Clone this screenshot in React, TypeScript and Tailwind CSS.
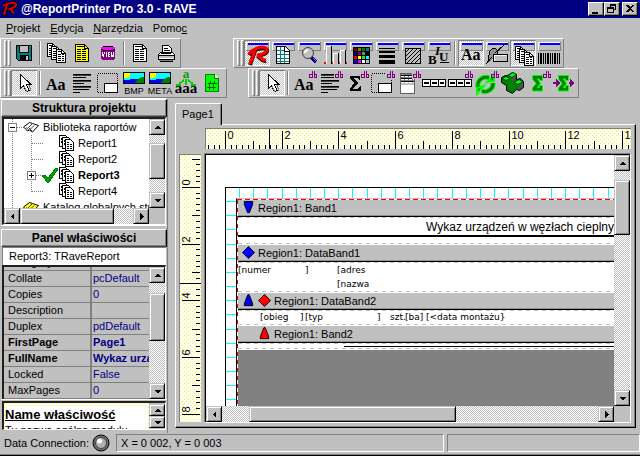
import React from "react";

const RAISED =
  "border border-t-[#c0c0c0] border-l-[#c0c0c0] border-r-black border-b-black bg-[#c0c0c0] shadow-[inset_1px_1px_#fff,inset_-1px_-1px_#808080]";
const DITHER =
  "bg-[repeating-conic-gradient(#fff_0_25%,#c0c0c0_0_50%)] bg-[length:2px_2px]";
const DOTTED =
  "bg-white bg-[conic-gradient(at_1px_1px,transparent_75%,#ff0_0),conic-gradient(at_1px_1px,transparent_75%,#ff0_0)] bg-[length:4px_4px] bg-[position:0_0,2px_2px]";

type Kids = { children?: React.ReactNode };

/* ---------- toolbar glyphs, drawn on a 26 x 26 button face ---------- */

function Glyph({ children }: Kids) {
  return (
    <svg width="26" height="26" viewBox="0 0 26 26" shapeRendering="crispEdges" className="block" aria-hidden="true">
      {children}
    </svg>
  );
}

function Sheet({ x, y, w = 10, h = 14, fill = "#fff" }: { x: number; y: number; w?: number; h?: number; fill?: string }) {
  const lines = [];
  for (let r = 5; r < h - 2; r += 2) {
    lines.push(<path key={r} d={`M${x + 2} ${y + r + 0.5}h${w - 4}`} stroke="#000" strokeDasharray={w > 11 ? "4 1" : "3 1"} />);
  }
  return (
    <g>
      <path d={`M${x + 0.5} ${y + 0.5}h${w - 5}l4 4v${h - 5}h-${w - 1}z`} fill={fill} stroke="#000" />
      <path d={`M${x + w - 4.5} ${y + 0.5}v4h4`} fill="none" stroke="#000" />
      <path d={`M${x + 2} ${y + 2.5}h${w - 7}`} stroke="#000" />
      {lines}
    </g>
  );
}

function Pane() {
  return (
    <g>
      <path d="M3 2h21v9H3z" fill="#c0c0c0" />
      <path d="M2.500 10V2.500H24" fill="none" stroke="#fff" />
      <path d="M24.500 2V10.500H3" fill="none" stroke="#808080" />
      <path d="M4 3h20v2H4z" fill="#00f" />
    </g>
  );
}

function Db() {
  return (
    <path
      d="M21.500 1v7M21 4.500h-2.500v3h3M23.500 1v7M24 4.500h1.500v3h-2"
      fill="none"
      stroke="#800080"
    />
  );
}

const SaveGlyph = () => (
  <Glyph>
    <path d="M5 5h16v16H7l-2-2z" fill="#000" />
    <path d="M6 6h14v14H7l-1-1z" fill="#008080" />
    <path d="M8 6h10v7H8z" fill="#000" />
    <path d="M9 6h8v6H9z" fill="#c0c0c0" />
    <path d="M9 15h9v6H9z" fill="#000" />
    <path d="M15 16h2v4h-2z" fill="#c0c0c0" />
    <path d="M19 6h1v1h-1z" fill="#c0c0c0" />
  </Glyph>
);

const StackGlyph = ({ pane = false }: { pane?: boolean }) => (
  <Glyph>
    {pane && <Pane />}
    <g transform={pane ? "translate(1 3)" : undefined}>
      <Sheet x={4} y={3} />
      <Sheet x={8} y={6} />
      <Sheet x={13} y={9} />
    </g>
  </Glyph>
);

const DocGlyph = ({ fill = "#fff" }: { fill?: string }) => (
  <Glyph>
    <Sheet x={6} y={4} w={14} h={18} fill={fill} />
  </Glyph>
);

const ViewGlyph = () => (
  <Glyph>
    <path d="M7 7h12v12l-2 1H9l-2-1z" fill="#800080" />
    <path d="M6 8h14v11h-1v1H7v-1H6z" fill="#800080" />
    <path d="M8 6h10v1h2v2h-2v1H8V9H6V7h2z" fill="#f0f" />
    <path d="M8 6.500h10M6 9.500h2M18 9.500h2M8 10.500h10" stroke="#000" />
    <path d="M7.500 12v3l1 2v-2l1-2v-1M11.500 12v5M15 12.500h-2v4h2M13 14.500h2M16.500 12v4.500h1v-2v2h1v-4.500" fill="none" stroke="#fff" />
  </Glyph>
);

const PrinterGlyph = () => (
  <Glyph>
    <path d="M9.500 13.500v-8h6l3 3v5z" fill="#fff" stroke="#000" />
    <path d="M11 8.500h4M11 10.500h6" stroke="#000" />
    <path d="M5.500 14.500l2-2h12l2 2v5h-16z" fill="#fff" stroke="#000" />
    <path d="M6 16h15v2H6z" fill="#c0c0c0" />
    <path d="M8 13.500h10M5 15.500h17M7 21.500h13" stroke="#000" />
    <path d="M6 20h14v1H6z" fill="#808080" />
  </Glyph>
);

const ArrowGlyph = () => (
  <Glyph>
    <path d="M9.500 4.500v14l3-3 3 6 2.500-1-2.500-6h4.500z" fill="#fff" stroke="#000" />
    <path d="M13 16l3 6M18 15l2 6" stroke="#808080" />
  </Glyph>
);

const AaGlyph = ({ db = false, pane = false }: { db?: boolean; pane?: boolean }) => (
  <Glyph>
    {pane && <Pane />}
    <text x="3" y="20" fontFamily="Liberation Serif, serif" fontWeight="700" fontSize="16">
      Aa
    </text>
    {db && <Db />}
  </Glyph>
);

const LinesGlyph = ({ db = false }: { db?: boolean }) => (
  <Glyph>
    <path d="M4 4.500h18M4 7.500h13M4 10.500h18M4 13.500h11M4 16.500h18M4 19.500h16M4 22.500h7" stroke="#000" />
    <path d="M4 5.500h18M4 11.500h18M4 17.500h18" stroke="#404040" />
    {db && <path d="M17 1h9v8h-9z" fill="#c0c0c0" />}
    {db && <Db />}
  </Glyph>
);

const SectionGlyph = ({ db = false }: { db?: boolean }) => (
  <Glyph>
    <path d="M2.500 3.500h20v19h-20z" fill="none" stroke="#000" strokeDasharray="1 1" />
    <path d="M9.500 13.500h13v9h-13z" fill="#fff" stroke="#000" />
    {db && <path d="M17 1h9v8h-9z" fill="#c0c0c0" />}
    {db && <Db />}
  </Glyph>
);

const ImageGlyph = ({ label }: { label: string }) => (
  <Glyph>
    <path d="M2 2h22v12H2z" fill="#000" />
    <path d="M3 3h20v10H3z" fill="#0ff" />
    <path d="M3 3h6v3l-2 2H3z" fill="#ff0" />
    <path d="M3 10h4l3-1h13v4H3z" fill="#00f" />
    <path d="M14 13l4-5 3-1h2v6z" fill="#008000" />
    <text x="13" y="24" textAnchor="middle" fontFamily="Liberation Sans, sans-serif" fontSize="9">
      {label}
    </text>
  </Glyph>
);

const TreeTextGlyph = () => (
  <Glyph>
    <path d="M13 9v6M11 10l-5 4M15 10l5 4M3 15h5M18 15h5" stroke="#0c0" strokeWidth="2" fill="none" />
    <text x="13" y="8" textAnchor="middle" fill="#00a000" fontFamily="Liberation Serif, serif" fontWeight="700" fontSize="13">
      a
    </text>
    <text x="13" y="23" textAnchor="middle" fontFamily="Liberation Serif, serif" fontWeight="700" fontSize="15">
      aaa
    </text>
  </Glyph>
);

const NumberGlyph = () => (
  <Glyph>
    <path d="M6.500 4.500h9l4 4v13h-13z" fill="#0f0" stroke="#008000" />
    <path d="M15.500 4.500v4h4" fill="#fff" stroke="#008000" />
    <path d="M11.500 11l-1.500 9M15.500 11l-1.500 9M8.500 13.500h9M7.500 17.500h9" stroke="#006000" fill="none" />
  </Glyph>
);

const GridSheetGlyph = () => (
  <Glyph>
    <Pane />
    <path d="M6.500 6.500h9l4 4v13h-13z" fill="#fff" stroke="#000" />
    <path d="M10.500 7v16M14.500 7v16M7 10.500h12M7 14.500h12M7 18.500h12M7 21.500h12" stroke="#008080" />
    <path d="M14.500 6.500v5h5" fill="#fff" stroke="#000" />
  </Glyph>
);

const MagnifierGlyph = () => (
  <Glyph>
    <Pane />
    <path d="M15.500 17.500l5 5" stroke="#000080" strokeWidth="3" />
    <circle cx="12" cy="13" r="5.500" fill="#c0c0c0" stroke="#404040" shapeRendering="auto" />
    <path d="M9 13a3 3 0 0 1 3-3" fill="none" stroke="#fff" strokeWidth="2" shapeRendering="auto" />
    <path d="M17 18l4 4" stroke="#8080c0" />
  </Glyph>
);

const AlignGlyph = () => (
  <Glyph>
    <Pane />
    <path d="M2 23h23" stroke="#f00" strokeWidth="2" />
    <path d="M5 6h4v18H5zM12 13h4v11h-4zM19 10h4v14h-4z" fill="#c0c0c0" />
    <path d="M4.500 24V6.500H9M11.500 24V13.500H16M18.500 24V10.500H23" fill="none" stroke="#fff" />
    <path d="M9.500 6v18M16.500 13v11M23.500 10v14" stroke="#000" />
  </Glyph>
);

const SWATCHES = [
  ["#800000", "#808000", "#008000", "#008080"],
  ["#000080", "#800080", "#808080", "#000000"],
  ["#ff0000", "#ffff00", "#00ff00", "#00ffff"],
  ["#0000ff", "#ff00ff", "#ffffff", "#c0c0c0"],
];

const PaletteGlyph = () => (
  <Glyph>
    <Pane />
    <path d="M5 7h17v17H5z" fill="#000" />
    {SWATCHES.map((row, r) =>
      row.map((c, i) => <rect key={`${r}-${i}`} x={6 + i * 4} y={8 + r * 4} width="3" height="3" fill={c} />)
    )}
  </Glyph>
);

const StrokeGlyph = () => (
  <Glyph>
    <Pane />
    <path d="M5 8h16v1H5zM5 11h16v2H5zM5 15h16v3H5zM5 20h16v4H5z" fill="#000" />
  </Glyph>
);

const HatchGlyph = () => (
  <Glyph>
    <Pane />
    <path d="M5.500 8.500h15v15h-15z" fill="#c0c0c0" stroke="#000" />
    <path d="M6 12l3-3M6 16l7-7M6 20l11-11M7 23L20 10M11 23l9-9M15 23l5-5" stroke="#000" />
  </Glyph>
);

const FontStyleGlyph = () => (
  <Glyph>
    <Pane />
    <g fontFamily="Liberation Serif, serif" fontWeight="700">
      <text x="9" y="15" fontSize="13" fontStyle="italic">
        I
      </text>
      <text x="2" y="24" fontSize="13">
        B
      </text>
      <text x="13" y="21" fontSize="13">
        U
      </text>
    </g>
    <path d="M14 22.500h9" stroke="#000" />
  </Glyph>
);

const ShapesGlyph = () => (
  <Glyph>
    <Pane />
    <path d="M5 22c-1-6 0-13 5-14 3 0 4 3 3 6" fill="#909090" stroke="#000" />
    <path d="M2 24l6-7M11 13l9-8" stroke="#000" fill="none" />
    <path d="M9.500 14.500h14v7h-14z" fill="#c0c0c0" stroke="#000" />
    <path d="M10.500 21V15.500H23" stroke="#fff" fill="none" />
  </Glyph>
);

const BarcodeGlyph = () => (
  <Glyph>
    <Pane />
    <path
      d="M2 13h1v11H2zM4 13h2v11H4zM7 13h1v11H7zM9 13h1v11H9zM11 13h2v11h-2zM14 13h1v11h-1zM16 13h1v11h-1zM18 13h2v11h-2zM21 13h1v11h-1zM23 13h1v11h-1z"
      fill="#000"
    />
  </Glyph>
);

const SigmaGlyph = () => (
  <Glyph>
    <path d="M7 6h10v4h-1l-1-2h-4l4 5-5 6h5l2-3h1v5H7v-2l4-6-4-5z" fill="#000" />
    <Db />
  </Glyph>
);

const MemoGlyph = () => (
  <Glyph>
    <path d="M5 3h15v9H5z" fill="#808080" />
    <path d="M5.500 3.500h14v20h-14z" fill="none" stroke="#606060" />
    <path d="M6 6.500h13M6 9.500h13M6 12.500h13" stroke="#fff" strokeDasharray="3 1" />
    <path d="M6 5.500h13M6 8.500h13M6 11.500h13" stroke="#000" />
    <path d="M6 15h13v8H6z" fill="#fff" />
    <path d="M17 1h9v8h-9z" fill="#c0c0c0" />
    <Db />
  </Glyph>
);

const NavGlyph = ({ db = false }: { db?: boolean }) => (
  <Glyph>
    <path d="M1.500 9.500h23v7h-23z" fill="#fff" stroke="#000" />
    <path d="M9.500 10v6M17.500 10v6" stroke="#000" />
    <path d="M3 13h5M11 13h5M19 13h4" stroke="#000" strokeWidth="2" />
    {db && <Db />}
  </Glyph>
);

const CycleGlyph = () => (
  <Glyph>
    <g shapeRendering="auto" fill="none">
      <path d="M5 17a8 8 0 0 1 11-9M20 13a8 8 0 0 1-11 8" stroke="#0f0" strokeWidth="5" />
      <path d="M14 12l7-1v-6zM11 16l-7 2v6z" stroke="#0f0" strokeWidth="2" fill="#008000" />
      <path d="M5 17a8 8 0 0 1 11-9M20 13a8 8 0 0 1-11 8" stroke="#008000" strokeWidth="3" />
    </g>
    <Db />
  </Glyph>
);

const CubesGlyph = () => (
  <Glyph>
    <g shapeRendering="auto">
      <path d="M8.500 5.500l5-3 4 2v5l4-1 3 3v6l-4 3-3-1-4 4-6-3v-5l-5-3v-5l4-2z" fill="#008000" stroke="#000" />
      <path d="M9 5.500l5-3 3.500 2-4.500 3zM3 8.500l4-2 4 2-4 2zM15 12.500l5-3 4 2-5 3z" fill="#0f0" stroke="#004000" />
      <path d="M19 15l5-3v5l-5 3zM13 8l4-3v5l-4 2z" fill="#505050" />
    </g>
  </Glyph>
);

const GreenSigma = ({ x = 0 }: { x?: number }) => (
  <g transform={`translate(${x} 0)`} shapeRendering="auto">
    <path d="M7.500 5.500h10v5h-3v-1.500h-2l3 4.500-3 4h2v-2h3v5.500h-10v-3l3.500-4.500-3.500-4.500z" fill="#008000" stroke="#0f0" />
  </g>
);

const CalcSigmaGlyph = () => (
  <Glyph>
    <GreenSigma />
    <Db />
  </Glyph>
);

const CalcFlowGlyph = () => (
  <Glyph>
    <path d="M2 13h4M18 13h3" stroke="#800080" strokeWidth="2" />
    <path d="M5 9l4 4-4 4zM19 9l4 4-4 4z" fill="#800080" />
    <GreenSigma />
  </Glyph>
);

const RaveGlyph = () => (
  <Glyph>
    <Pane />
    <g shapeRendering="auto">
      <path d="M5 15c4-6 15-9 18-5 1 3-5 6-10 6 4 1 4 6 9 5M11 11L6 25" fill="none" stroke="#400000" strokeWidth="4" />
      <path d="M5 14c4-6 15-9 18-5 1 3-5 6-10 6 4 1 4 6 9 5M11 10L6 24" fill="none" stroke="#f00" strokeWidth="3" />
    </g>
  </Glyph>
);

/* ---------- toolbars ---------- */

function Tool({ label, on = false, children }: Kids & { label: string; on?: boolean }) {
  return (
    <button
      type="button"
      aria-label={label}
      aria-pressed={on}
      className={
        on
          ? "size-[26px] shadow-[inset_1px_1px_#808080,inset_-1px_-1px_#fff] bg-[repeating-conic-gradient(#fff_0_25%,#c0c0c0_0_50%)] bg-[length:2px_2px]"
          : "size-[26px]"
      }
    >
      {children}
    </button>
  );
}

const Rule = () => (
  <span className="flex w-[6px] justify-center py-px">
    <span className="w-[2px] border-l border-l-[#808080] border-r border-r-white" />
  </span>
);

function Toolbar({ label, children }: Kids & { label: string }) {
  return (
    <div
      role="toolbar"
      aria-label={label}
      className="flex h-[30px] border border-t-white border-l-white border-r-[#808080] border-b-[#808080] py-px pr-px"
    >
      <span className="flex w-[10px] gap-px pl-[3px]">
        <span className="w-[3px] border border-t-white border-l-white border-r-[#808080] border-b-[#808080]" />
        <span className="w-[3px] border border-t-white border-l-white border-r-[#808080] border-b-[#808080]" />
      </span>
      {children}
    </div>
  );
}

/* ---------- scroll bars ---------- */

const ARROWS = {
  up: "M4 9h7L7.500 5.500z",
  down: "M4 6h7L7.500 9.500z",
  left: "M9 4v7L5.500 7.500z",
  right: "M6 4v7L9.500 7.500z",
};

function Arrow({ dir, small = false }: { dir: keyof typeof ARROWS; small?: boolean }) {
  return (
    <button
      type="button"
      aria-label={dir}
      className={`${RAISED} flex w-4 shrink-0 items-center justify-center overflow-hidden ${small ? "h-3" : "h-4"}`}
    >
      <svg width="15" height="15" viewBox="0 0 15 15" shapeRendering="crispEdges" className="shrink-0">
        <path d={ARROWS[dir]} fill="#000" />
      </svg>
    </button>
  );
}

function VScroll({ before, thumb }: { before: string; thumb: string }) {
  return (
    <div className={`${DITHER} flex w-4 shrink-0 flex-col`}>
      <Arrow dir="up" />
      <div className={before} />
      <div className={`${RAISED} ${thumb}`} />
      <div className="flex-1" />
      <Arrow dir="down" />
    </div>
  );
}

function HScroll({ before, thumb }: { before: string; thumb: string }) {
  return (
    <div className={`${DITHER} flex h-4 min-w-0 flex-1`}>
      <Arrow dir="left" />
      <div className={before} />
      <div className={`${RAISED} ${thumb}`} />
      <div className="flex-1" />
      <Arrow dir="right" />
    </div>
  );
}

/* ---------- project tree ---------- */

const Book = ({ fill }: { fill: string }) => (
  <svg width="16" height="16" viewBox="0 0 16 16" className="shrink-0">
    <path d="M.500 8l6-4.500 3 1 6 2-6 6.500-3-2-2 1z" fill={fill} stroke="#000" />
    <path d="M9.500 4.500l-5 5M3 8.500l2.500 2M9 12l-3-3M11 6.500l-4 4" stroke="#404040" fill="none" />
  </svg>
);

const MiniStack = () => (
  <svg width="16" height="16" viewBox="0 0 16 16" shapeRendering="crispEdges" className="shrink-0">
    <path d="M.500.500h6l2 2v9h-8z" fill="#fff" stroke="#000" />
    <path d="M3.500 2.500h6l2 2v9h-8z" fill="#fff" stroke="#000" />
    <path d="M6.500 4.500h5l3 3v8h-8z" fill="#fff" stroke="#000" />
    <path d="M8 7.500h3M8 9.500h5M8 11.500h5M8 13.500h5M2 3v6M5 5v6" stroke="#000" strokeDasharray="2 1" />
  </svg>
);

const Expander = ({ x, plus = false }: { x: number; plus?: boolean }) => (
  <g>
    <rect x={x + 0.5} y="4.500" width="8" height="8" fill="#fff" stroke="#808080" />
    <path d={`M${x + 2} 8.500h5`} stroke="#000" />
    {plus && <path d={`M${x + 4.5} 6v5`} stroke="#000" />}
  </g>
);

function Report({ name, current = false, last = false }: { name: string; current?: boolean; last?: boolean }) {
  return (
    <li className="flex h-4 items-center">
      <svg width="55" height="16" viewBox="0 0 55 16" shapeRendering="crispEdges" className="shrink-0">
        <path d={`M8.500 0v16M27.500 0v${last ? 9 : 16}M28 8.500h11`} stroke="#808080" strokeDasharray="1 1" />
        {current && <Expander x={23} plus />}
        {current && <path d="M38 8h3l3 3 8-10 2 1-9 13h-2z" fill="#00a000" stroke="#008000" />}
      </svg>
      <MiniStack />
      <span className={current ? "pl-[3px] font-bold" : "pl-[3px]"}>{name}</span>
    </li>
  );
}

function ProjectTree() {
  return (
    <div className="mx-px flex h-[108px] flex-col border-t-2 border-l-2 border-t-[#202020] border-l-[#202020] border-r border-b border-r-white border-b-white">
      <div className="flex min-h-0 flex-1">
        <ul className="min-w-0 flex-1 overflow-hidden whitespace-nowrap bg-white">
          <li className="flex h-4 items-center">
            <svg width="19" height="16" viewBox="0 0 19 16" shapeRendering="crispEdges" className="shrink-0">
              <path d="M8.500 0v16M13 8.500h6" stroke="#808080" strokeDasharray="1 1" />
              <Expander x={4} />
            </svg>
            <Book fill="#fff" />
            <span className="pl-1">Biblioteka raportów</span>
          </li>
          <Report name="Report1" />
          <Report name="Report2" />
          <Report name="Report3" current />
          <Report name="Report4" last />
          <li className="flex h-4 items-center">
            <svg width="19" height="16" viewBox="0 0 19 16" shapeRendering="crispEdges" className="shrink-0">
              <path d="M8.500 0v16" stroke="#808080" strokeDasharray="1 1" />
            </svg>
            <Book fill="#ff0" />
            <span className="pl-1">Katalog globalnych stron</span>
          </li>
        </ul>
        <VScroll before="h-2" thumb="h-9" />
      </div>
      <div className="flex">
        <HScroll before="w-0" thumb="w-[94px]" />
        <div className="size-4 bg-[#c0c0c0]" />
      </div>
    </div>
  );
}

/* ---------- property grid ---------- */

const PROPS: [string, string, boolean?][] = [
  ["Category", ""],
  ["Collate", "pcDefault"],
  ["Copies", "0"],
  ["Description", ""],
  ["Duplex", "pdDefault"],
  ["FirstPage", "Page1", true],
  ["FullName", "Wykaz urządzeń", true],
  ["Locked", "False"],
  ["MaxPages", "0"],
];

function PropertyGrid() {
  return (
    <div className="mx-px flex min-h-0 flex-1 border-t-2 border-l-2 border-t-[#202020] border-l-[#202020] border-r border-r-white">
      <div className="flex min-w-0 flex-1 items-end overflow-hidden">
        <table className="w-full table-fixed border-collapse">
          <tbody>
            {PROPS.map(([name, value, bold]) => (
              <tr key={name} className={bold ? "h-4 font-bold" : "h-4"}>
                <th
                  scope="row"
                  className={`h-4 w-[87px] border-b border-b-[#808080] border-r-2 border-r-[#808080] p-0 pl-1 text-left leading-[15px] ${bold ? "font-bold" : "font-normal"}`}
                >
                  {name}
                </th>
                <td className="h-4 overflow-hidden border-b border-b-[#808080] p-0 pl-px leading-[15px] whitespace-nowrap text-[#000080]">
                  {value}
                </td>
              </tr>
            ))}
          </tbody>
        </table>
      </div>
      <VScroll before="h-[10px]" thumb="h-12" />
    </div>
  );
}

const PanelTitle = ({ children }: Kids) => (
  <h2 className="h-[18px] border border-t-white border-l-white border-r-black border-b-[#404040] text-center text-[12px] leading-[16px] font-bold shadow-[inset_-1px_-1px_#808080]">
    {children}
  </h2>
);

function SidePanel() {
  return (
    <aside className="flex w-[168px] shrink-0 flex-col border-t border-r border-t-white border-r-[#808080] pl-px">
      <PanelTitle>Struktura projektu</PanelTitle>
      <ProjectTree />
      <div className="h-1 border-t border-t-white" />
      <PanelTitle>Panel właściwości</PanelTitle>
      <div className="mx-px h-[18px] border-t border-l border-t-[#808080] border-l-[#808080] bg-white pl-[6px] leading-[17px]">
        Report3: TRaveReport
      </div>
      <PropertyGrid />
      <div className="h-[2px] border-t border-t-white" />
      <div className="mx-px flex h-[29px] border-t-2 border-l-2 border-r border-b border-t-[#202020] border-l-[#202020] border-r-white border-b-white">
        <div className={`${DOTTED} min-w-0 flex-1 overflow-hidden px-px pt-[3px]`}>
          <div className="h-full overflow-hidden bg-white whitespace-nowrap">
            <h3 className="h-[18px] text-[13px] leading-[18px] font-bold underline">Name właściwość</h3>
            <p className="leading-[12px]">Tu nazwa ogólna modułu</p>
          </div>
        </div>
        <div className="flex flex-col justify-center bg-[#c0c0c0]">
          <Arrow dir="up" small />
          <Arrow dir="down" small />
        </div>
      </div>
      <div className="h-[3px]" />
    </aside>
  );
}

/* ---------- rulers ---------- */

const STEP = 28.35;

function HRuler() {
  const marks = [];
  const count = Math.ceil(((window.innerWidth - 234) / STEP) * 5);
  for (let i = -3; i < count; i++) {
    const x = Math.round(19 + (i * STEP) / 5) + 0.5;
    const top = i % 10 === 0 ? 2 : i % 5 === 0 ? 12 : 16;
    marks.push(<path key={i} d={`M${x} ${top}V20`} stroke="#000" />);
    if (i >= 0 && i % 10 === 0) {
      marks.push(
        <text key={`t${i}`} x={x + 2} y="10" fontSize="11" fontFamily="Liberation Sans, sans-serif">
          {i / 5}
        </text>
      );
    }
  }
  return (
    <div className={`${DOTTED} ml-px h-[21px] overflow-hidden border-t border-l border-t-[#808080] border-l-[#808080]`}>
      <svg height="20" shapeRendering="crispEdges" className="block w-full">
        {marks}
        <path d="M63.500 0v20" stroke="#000040" />
      </svg>
    </div>
  );
}

function VRuler() {
  const marks = [];
  const count = Math.ceil(((window.innerHeight - 224) / STEP) * 5);
  for (let i = -5; i < count; i++) {
    const y = Math.round(32 + (i * STEP) / 5) + 0.5;
    const left = i % 10 === 0 ? 2 : i % 5 === 0 ? 12 : 16;
    marks.push(<path key={i} d={`M${left} ${y}H20`} stroke="#000" />);
    if (i >= 0 && i % 10 === 0) {
      marks.push(
        <text key={`t${i}`} transform={`translate(10 ${y - 2}) rotate(-90)`} fontSize="11" fontFamily="Liberation Sans, sans-serif">
          {i / 5}
        </text>
      );
    }
  }
  return (
    <div className={`${DOTTED} mt-px mb-px min-h-0 overflow-hidden border-t border-l border-t-[#808080] border-l-[#808080]`}>
      <svg width="21" height="100%" shapeRendering="crispEdges" className="block">
        {marks}
        <path d="M0 128.500h21" stroke="#000" />
      </svg>
    </div>
  );
}

/* ---------- report design surface ---------- */

const DASH = "h-px bg-[repeating-linear-gradient(90deg,#c0c0c0_0_4px,transparent_4px_8px)]";

const SHAPES = {
  top: "M2 0h9v3l-3.500 9h-2L2 3z",
  diamond: "M6.500 0L13 6.500 6.500 13 0 6.500z",
  cone: "M6 0h1l1 2 3 8v2H2v-2l3-8z",
};

function Mark({ shape, color }: { shape: keyof typeof SHAPES; color: string }) {
  return (
    <svg width="13" height="14" viewBox="-0.500 -0.500 14 15" className="shrink-0">
      <path d={SHAPES[shape]} fill={color} stroke="#000" strokeWidth="1" />
    </svg>
  );
}

function Band({ name, marks, body, children }: Kids & { name: string; marks: React.ReactNode; body: string }) {
  return (
    <section>
      <h4 className="flex h-[17px] items-center gap-[3px] border-b border-b-black bg-[#c0c0c0] pl-1 leading-4 shadow-[inset_0_-1px_#909090]">
        {marks}
        <span>{name}</span>
      </h4>
      <div className={`flex flex-col pb-px ${body}`}>
        <div className={DASH} />
        <div className="min-h-0 flex-1">{children}</div>
        <div className={DASH} />
      </div>
    </section>
  );
}

function Page() {
  const cols = [];
  for (let i = 0; i < 150; i++) cols.push(`M${Math.round(3 + (i * STEP) / 2) + 0.5} 0v10`);
  const rows = [];
  for (let i = 0; i < 80; i++) rows.push(`M0 ${Math.round(13 + (i * STEP) / 2) + 0.5}h10`);
  return (
    <div className="min-w-0 flex-1 overflow-hidden bg-white pt-8 pl-[19px]">
      <div className="grid h-full grid-cols-[10px_minmax(0,1fr)] grid-rows-[10px_minmax(0,1fr)] border-t border-l border-black">
        <div />
        <svg height="10" shapeRendering="crispEdges" className="block w-full">
          <path d={cols.join("")} stroke="#0ff" />
        </svg>
        <svg width="10" height="100%" shapeRendering="crispEdges" className="block">
          <path transform="translate(0 -10)" d={rows.join("")} stroke="#0ff" />
        </svg>
        <div className="flex min-h-0 flex-col border-t border-l border-t-[#c0c0c0] border-l-black">
          <div className="h-px shrink-0 bg-[repeating-linear-gradient(90deg,#f00_0_5px,#fff_5px_8px)]" />
          <div className="flex min-h-0 flex-1">
            <div className="w-px shrink-0 bg-[repeating-linear-gradient(180deg,#d00_0_4px,#fff_4px_8px)]" />
            <div className="flex min-w-0 flex-1 flex-col whitespace-nowrap">
              <Band name="Region1: Band1" marks={<Mark shape="top" color="#00f" />} body="h-7">
                <p className="ml-[188px] h-[17px] text-[12px] leading-[19px]">Wykaz urządzeń w węzłach cieplnych</p>
                <div className="h-[2px] bg-black" />
              </Band>
              <Band name="Region1: DataBand1" marks={<Mark shape="diamond" color="#00f" />} body="h-[31px]">
                <div className="grid grid-cols-[67px_32px_1fr] font-[DejaVu_Sans,sans-serif] text-[9px] leading-[14px]">
                  <span>[numer</span>
                  <span>]</span>
                  <span>[adres</span>
                  <span className="col-start-3">[nazwa</span>
                </div>
              </Band>
              <Band
                name="Region1: DataBand2"
                marks={
                  <>
                    <Mark shape="cone" color="#00f" />
                    <Mark shape="diamond" color="#f00" />
                  </>
                }
                body="h-4"
              >
                <div className="grid grid-cols-[40px_5px_72px_13px_15px_21px_1fr] pl-[22px] font-[DejaVu_Sans,sans-serif] text-[9px] leading-[13px]">
                  <span>[obieg</span>
                  <span>]</span>
                  <span>[typ</span>
                  <span>]</span>
                  <span>szt.</span>
                  <span>[ba]</span>
                  <span>{"[<data montażu}"}</span>
                </div>
              </Band>
              <Band
                name="Region1: Band2"
                marks={
                  <>
                    <span className="w-[13px]" />
                    <Mark shape="cone" color="#f00" />
                  </>
                }
                body="h-[7px]"
              >
                <div className="mt-[2px] ml-[106px] h-px bg-black" />
              </Band>
              <div className="flex-1 bg-[#808080]" />
            </div>
          </div>
        </div>
      </div>
    </div>
  );
}

function Designer() {
  return (
    <main className="flex min-w-0 flex-1 flex-col pt-[5px] pr-1 pb-[5px] pl-[7px]">
      <div role="tablist" className="relative z-10 -mb-px flex">
        <button
          role="tab"
          aria-selected="true"
          type="button"
          className="h-[22px] rounded-t-[2px] border-t border-l border-r border-t-white border-l-white border-r-black bg-[#c0c0c0] pr-[7px] pb-0.5 pl-[6px] shadow-[inset_-1px_0_#808080]"
        >
          Page1
        </button>
      </div>
      <div className="flex min-h-0 flex-1 flex-col border border-t-white border-l-white border-r-black border-b-black shadow-[inset_-1px_-1px_#808080]">
        <div className="grid min-h-0 flex-1 grid-cols-[22px_minmax(0,1fr)] grid-rows-[21px_minmax(0,1fr)] gap-x-[3px] gap-y-1 pt-[3px] pr-1 pb-1 pl-[3px]">
          <div />
          <HRuler />
          <VRuler />
          <div className="flex min-h-0 flex-col border border-t-[#808080] border-l-[#808080] border-r-white border-b-white">
            <div className="flex min-h-0 flex-1 flex-col border-t border-l border-black">
              <div className="flex min-h-0 flex-1">
                <Page />
                <VScroll before="h-[9px]" thumb="h-[55px]" />
              </div>
              <div className="flex">
                <HScroll before="w-[27px]" thumb="w-[207px]" />
                <div className="size-4" />
              </div>
            </div>
          </div>
        </div>
      </div>
    </main>
  );
}

/* ---------- window chrome ---------- */

function Caption({ label, children }: Kids & { label: string }) {
  return (
    <button
      type="button"
      aria-label={label}
      className="h-[14px] w-4 border border-t-white border-l-white border-r-black border-b-black bg-[#c0c0c0] shadow-[inset_-1px_-1px_#808080]"
    >
      <svg width="14" height="12" viewBox="0 0 14 12" shapeRendering="crispEdges" className="block">
        {children}
      </svg>
    </button>
  );
}

export default function App() {
  return (
    <div className="flex h-screen flex-col overflow-hidden bg-[#c0c0c0] font-['Liberation_Sans',Arial,sans-serif] text-[11px] leading-4 text-black">
      <header className="flex h-[18px] shrink-0 items-center bg-[#000080] pr-0.5 pl-0.5 text-white">
        <svg width="16" height="16" viewBox="0 0 16 16">
          <path d="M1 5c4-3 12-4 13-2 1 3-4 4-6 5 3 1 2 4 4 4M5 4L2 15" fill="none" stroke="#000" strokeWidth="4" />
          <path d="M1 5c4-3 12-4 13-2 1 3-4 4-6 5 3 1 2 4 4 4M5 4L2 14" fill="none" stroke="#e00000" strokeWidth="2" />
        </svg>
        <h1 className="flex-1 pl-[3px] text-[12px] font-bold">@ReportPrinter Pro 3.0 - RAVE</h1>
        <Caption label="Minimize">
          <path d="M3 9h6v2H3z" fill="#000" />
        </Caption>
        <Caption label="Restore">
          <path d="M5.500 4V1.500h5v5H9M5 2.500h6M2.500 4.500h6v5h-6zM2 5.500h7" fill="none" stroke="#000" />
        </Caption>
        <span className="w-0.5" />
        <Caption label="Close">
          <path d="M3 2h2l2 2 2-2h2L8 5.500 11 9H9L7 7 5 9H3l3-3.500z" fill="#000" />
        </Caption>
      </header>

      <nav className="flex h-5 shrink-0 items-center gap-[10px] pl-[6px]">
        <button type="button"><u>P</u>rojekt</button>
        <button type="button"><u>E</u>dycja</button>
        <button type="button"><u>N</u>arzędzia</button>
        <button type="button">Pomo<u>c</u></button>
      </nav>

      <div className="flex shrink-0 gap-[52px]">
        <Toolbar label="Project">
          <Tool label="Save"><SaveGlyph /></Tool>
          <Rule />
          <Tool label="New report"><StackGlyph /></Tool>
          <Tool label="New page"><DocGlyph fill="#ff0" /></Tool>
          <Tool label="New view"><ViewGlyph /></Tool>
          <Rule />
          <Tool label="Page"><DocGlyph /></Tool>
          <Tool label="Print"><PrinterGlyph /></Tool>
        </Toolbar>
        <Toolbar label="Editors">
          <Tool label="Rave" on><RaveGlyph /></Tool>
          <Tool label="Page designer"><GridSheetGlyph /></Tool>
          <Tool label="Zoom"><MagnifierGlyph /></Tool>
          <Tool label="Alignment"><AlignGlyph /></Tool>
          <Tool label="Colors"><PaletteGlyph /></Tool>
          <Tool label="Lines"><StrokeGlyph /></Tool>
          <Tool label="Fills"><HatchGlyph /></Tool>
          <Tool label="Fonts"><FontStyleGlyph /></Tool>
          <Rule />
          <Tool label="Text tools" on><AaGlyph pane /></Tool>
          <Tool label="Shapes"><ShapesGlyph /></Tool>
          <Tool label="Report tools" on><StackGlyph pane /></Tool>
          <Tool label="Bar codes"><BarcodeGlyph /></Tool>
        </Toolbar>
      </div>
      <div className="flex shrink-0 gap-[21px]">
        <Toolbar label="Standard">
          <Tool label="Select" on><ArrowGlyph /></Tool>
          <Rule />
          <Tool label="Text"><AaGlyph /></Tool>
          <Tool label="Memo"><LinesGlyph /></Tool>
          <Tool label="Section"><SectionGlyph /></Tool>
          <Tool label="Bitmap"><ImageGlyph label="BMP" /></Tool>
          <Tool label="Metafile"><ImageGlyph label="META" /></Tool>
          <Tool label="Font master"><TreeTextGlyph /></Tool>
          <Tool label="Page number"><NumberGlyph /></Tool>
        </Toolbar>
        <Toolbar label="Data">
          <Tool label="Select data" on><ArrowGlyph /></Tool>
          <Rule />
          <Tool label="Data text"><AaGlyph db /></Tool>
          <Tool label="Data memo"><LinesGlyph db /></Tool>
          <Tool label="Calc text"><SigmaGlyph /></Tool>
          <Tool label="Region"><SectionGlyph db /></Tool>
          <Tool label="Data mirror"><MemoGlyph /></Tool>
          <Tool label="Band"><NavGlyph /></Tool>
          <Tool label="Data band"><NavGlyph db /></Tool>
          <Tool label="Data cycle"><CycleGlyph /></Tool>
          <Tool label="Cubes"><CubesGlyph /></Tool>
          <Tool label="Calc total"><CalcSigmaGlyph /></Tool>
          <Tool label="Calc controller"><CalcFlowGlyph /></Tool>
        </Toolbar>
      </div>

      <div className="flex min-h-0 flex-1">
        <SidePanel />
        <Designer />
      </div>

      <footer className="flex h-[23px] shrink-0 items-start gap-[3px] border-b border-b-black pt-px shadow-[inset_0_-1px_#808080]">
        <span className="w-[87px] shrink-0 pl-1 leading-[18px] whitespace-nowrap">Data Connection:</span>
        <svg width="23" height="18" viewBox="0 0 23 18" className="shrink-0">
          <circle cx="11" cy="9" r="8" fill="#707070" stroke="#000" />
          <circle cx="11" cy="9" r="5.500" fill="#b0b0b0" stroke="#404040" />
          <circle cx="9.500" cy="7" r="2.500" fill="#fff" />
        </svg>
        <output className="h-[18px] flex-[327] border border-t-[#808080] border-l-[#808080] border-r-white border-b-white pl-1 leading-[17px]">
          X = 0 002, Y = 0 003
        </output>
        <div className="h-[18px] flex-[194] border border-t-[#808080] border-l-[#808080] border-r-white border-b-white" />
      </footer>
    </div>
  );
}
